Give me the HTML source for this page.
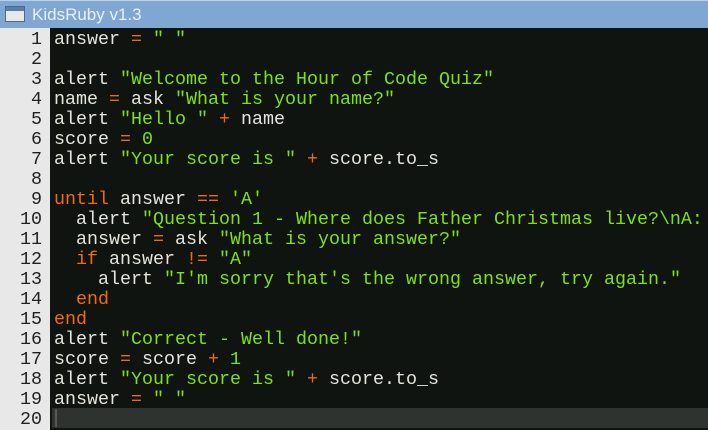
<!DOCTYPE html>
<html><head><style>
body{margin:0;width:708px;height:430px;overflow:hidden;background:#0f1410;font-family:"Liberation Mono",monospace;}
.title{position:absolute;left:0;top:0;width:708px;height:28px;background:#7fa7d2;border-top:1px solid #c0d0e0;box-sizing:border-box;}
.title span{position:absolute;left:32px;top:4px;font-family:"Liberation Sans",sans-serif;font-size:17px;color:#e8eef6;}
.icon{position:absolute;left:5px;top:5px;width:20px;height:16px;background:#e8e8e8;border:1px solid #4a6a90;box-sizing:border-box;}
.icon:before{content:"";position:absolute;left:0;top:0;right:0;height:4px;background:#5a7ea8;}
.gut{position:absolute;left:0;top:28px;width:50px;height:402px;background:#e8e8e8;}
.ln{position:absolute;left:0;width:42px;text-align:right;font-size:18.33px;color:#222;line-height:20px;margin-top:2px;}
.cl{position:absolute;left:54px;font-size:18.33px;line-height:20px;color:#e4e4dc;white-space:pre;margin-top:2px;}
.hl{position:absolute;left:52px;top:408px;width:656px;height:20px;background:#2f332f;}
.car{position:absolute;left:55px;top:409px;width:2px;height:18px;background:#555a55;}
.s{color:#80e010}.o{color:#f06a10}.n{color:#80e010}
</style></head><body>
<div class="title"><div class="icon"></div><span>KidsRuby v1.3</span></div>
<div class="gut"></div>
<div class="hl"></div><div class="car"></div>
<div class="ln" style="top:28px">1</div><div class="ln" style="top:48px">2</div><div class="ln" style="top:68px">3</div><div class="ln" style="top:88px">4</div><div class="ln" style="top:108px">5</div><div class="ln" style="top:128px">6</div><div class="ln" style="top:148px">7</div><div class="ln" style="top:168px">8</div><div class="ln" style="top:188px">9</div><div class="ln" style="top:208px">10</div><div class="ln" style="top:228px">11</div><div class="ln" style="top:248px">12</div><div class="ln" style="top:268px">13</div><div class="ln" style="top:288px">14</div><div class="ln" style="top:308px">15</div><div class="ln" style="top:328px">16</div><div class="ln" style="top:348px">17</div><div class="ln" style="top:368px">18</div><div class="ln" style="top:388px">19</div><div class="ln" style="top:408px">20</div>
<div class="cl" style="top:28px">answer <span class="o">=</span> <span class="s">" "</span></div>
<div class="cl" style="top:68px">alert <span class="s">"Welcome to the Hour of Code Quiz"</span></div>
<div class="cl" style="top:88px">name <span class="o">=</span> ask <span class="s">"What is your name?"</span></div>
<div class="cl" style="top:108px">alert <span class="s">"Hello "</span> <span class="o">+</span> name</div>
<div class="cl" style="top:128px">score <span class="o">=</span> <span class="n">0</span></div>
<div class="cl" style="top:148px">alert <span class="s">"Your score is "</span> <span class="o">+</span> score.to_s</div>
<div class="cl" style="top:188px"><span class="o">until</span> answer <span class="o">==</span> <span class="s">'A'</span></div>
<div class="cl" style="top:208px">  alert <span class="s">"Question 1 - Where does Father Christmas live?\nA:</span></div>
<div class="cl" style="top:228px">  answer <span class="o">=</span> ask <span class="s">"What is your answer?"</span></div>
<div class="cl" style="top:248px">  <span class="o">if</span> answer <span class="o">!=</span> <span class="s">"A"</span></div>
<div class="cl" style="top:268px">    alert <span class="s">"I'm sorry that's the wrong answer, try again."</span></div>
<div class="cl" style="top:288px">  <span class="o">end</span></div>
<div class="cl" style="top:308px"><span class="o">end</span></div>
<div class="cl" style="top:328px">alert <span class="s">"Correct - Well done!"</span></div>
<div class="cl" style="top:348px">score <span class="o">=</span> score <span class="o">+</span> <span class="n">1</span></div>
<div class="cl" style="top:368px">alert <span class="s">"Your score is "</span> <span class="o">+</span> score.to_s</div>
<div class="cl" style="top:388px">answer <span class="o">=</span> <span class="s">" "</span></div>
</body></html>
